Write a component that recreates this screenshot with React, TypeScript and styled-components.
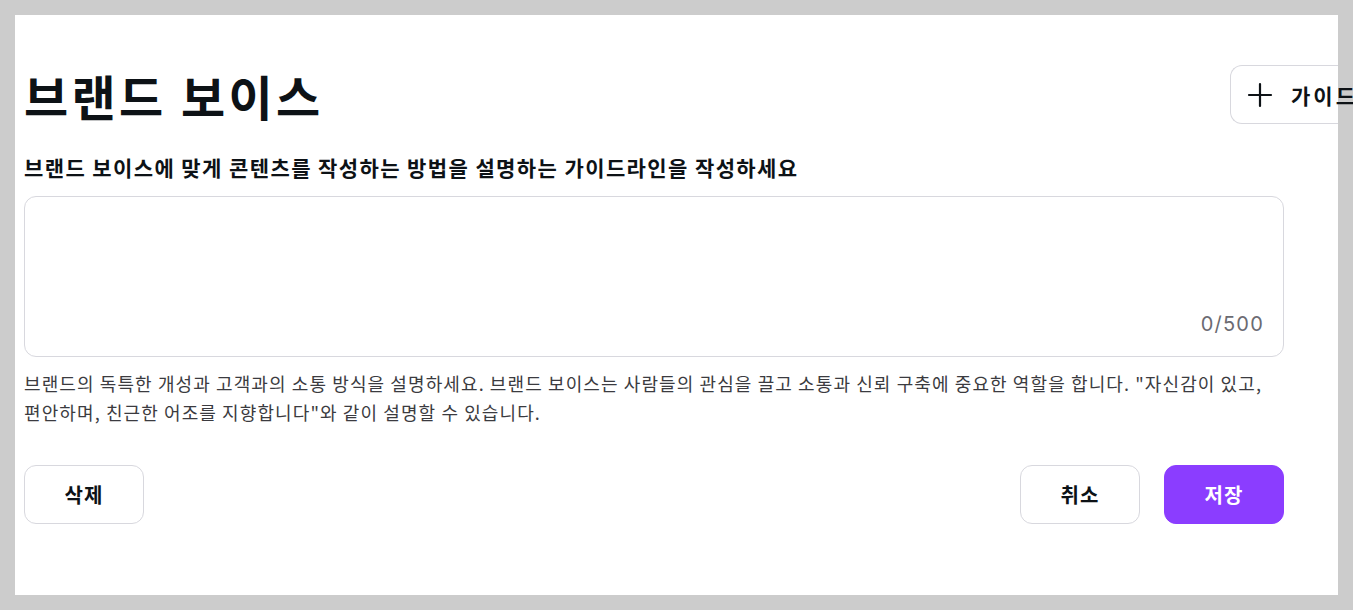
import React, { useState } from 'react';
import styled, { createGlobalStyle } from 'styled-components';

const GlobalStyle = createGlobalStyle`
  html, body {
    margin: 0;
    padding: 0;
    background: #cccccc;
  }
  body {
    font-family: "Noto Sans CJK KR", "Noto Sans", sans-serif;
    color: #0d1216;
    word-break: keep-all;
  }
`;

const Page = styled.div`
  padding: 15px;
  height: 610px;
  box-sizing: border-box;
`;

const Panel = styled.div`
  background: #ffffff;
  height: 580px;
  box-sizing: border-box;
  padding: 50px 0 0 9px;
`;

const Header = styled.div`
  display: flex;
  align-items: center;
  justify-content: space-between;
  height: 59px;
`;

const Title = styled.h1`
  margin: 0;
  font-size: 48px;
  font-weight: 700;
  line-height: 1;
  letter-spacing: 3.4px;
  color: #0d1216;
`;

const GuideButton = styled.button`
  display: flex;
  align-items: center;
  gap: 18px;
  height: 59px;
  width: 108px;
  flex-shrink: 0;
  padding: 0 16px;
  overflow: visible;
  white-space: nowrap;
  background: #fff;
  border: 1px solid #d8d8de;
  border-right: none;
  border-radius: 12px 0 0 12px;
  font-family: inherit;
  font-size: 21px;
  font-weight: 700;
  letter-spacing: 3px;
  color: #0d1216;
  cursor: pointer;

  svg {
    flex-shrink: 0;
  }
`;

const Content = styled.div`
  max-width: 1260px;
`;

const Label = styled.label`
  display: block;
  margin-top: 29px;
  font-size: 21px;
  font-weight: 700;
  line-height: 28px;
  letter-spacing: 1.4px;
`;

const Field = styled.div`
  position: relative;
  margin-top: 15px;
  height: 161px;
  box-sizing: border-box;
  border: 1px solid #d8d8de;
  border-radius: 12px;
`;

const TextArea = styled.textarea`
  width: 100%;
  height: 100%;
  box-sizing: border-box;
  border: none;
  border-radius: 12px;
  resize: none;
  background: transparent;
  padding: 16px 20px 40px;
  font-family: inherit;
  font-size: 18px;
  outline: none;
`;

const Counter = styled.span`
  position: absolute;
  right: 19px;
  bottom: 20px;
  font-family: "Inter", sans-serif;
  font-size: 20px;
  letter-spacing: 1.2px;
  color: #6b6b72;
`;

const Help = styled.p`
  margin: 12px 0 0;
  font-size: 18px;
  line-height: 29px;
  letter-spacing: 1.1px;
  color: #3b3b40;
`;

const Actions = styled.div`
  display: flex;
  align-items: center;
  gap: 24px;
  margin-top: 38px;
`;

const Spacer = styled.div`
  flex: 1;
`;

const ActionButton = styled.button<{ $primary?: boolean }>`
  width: 120px;
  height: 59px;
  border-radius: 12px;
  border: 1px solid ${(p) => (p.$primary ? '#8b3dff' : '#d8d8de')};
  background: ${(p) => (p.$primary ? '#8b3dff' : '#ffffff')};
  color: ${(p) => (p.$primary ? '#ffffff' : '#0d1216')};
  font-family: inherit;
  font-size: 20px;
  font-weight: 700;
  letter-spacing: 1px;
  cursor: pointer;
`;

const PlusIcon = () => (
  <svg width="26" height="26" viewBox="0 0 26 26" fill="none">
    <path d="M13 2v22M2 13h22" stroke="#0d1216" strokeWidth="2.2" strokeLinecap="round" />
  </svg>
);

export default function App() {
  const [text, setText] = useState('');

  return (
    <>
      <GlobalStyle />
      <Page>
        <Panel>
          <Header>
            <Title>브랜드 보이스</Title>
            <GuideButton type="button">
              <PlusIcon />
              가이드라인
            </GuideButton>
          </Header>
          <Content>
            <Label htmlFor="voice">
              브랜드 보이스에 맞게 콘텐츠를 작성하는 방법을 설명하는 가이드라인을 작성하세요
            </Label>
            <Field>
              <TextArea
                id="voice"
                maxLength={500}
                value={text}
                onChange={(e) => setText(e.target.value)}
              />
              <Counter>{text.length}/500</Counter>
            </Field>
            <Help>
              브랜드의 독특한 개성과 고객과의 소통 방식을 설명하세요. 브랜드 보이스는 사람들의 관심을 끌고 소통과 신뢰 구축에 중요한 역할을 합니다. "자신감이 있고, 편안하며, 친근한 어조를 지향합니다"와 같이 설명할 수 있습니다.
            </Help>
            <Actions>
              <ActionButton type="button">삭제</ActionButton>
              <Spacer />
              <ActionButton type="button">취소</ActionButton>
              <ActionButton type="button" $primary>
                저장
              </ActionButton>
            </Actions>
          </Content>
        </Panel>
      </Page>
    </>
  );
}
